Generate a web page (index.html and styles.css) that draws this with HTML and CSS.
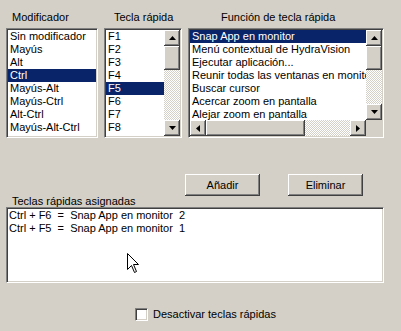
FILE: index.html
```html
<!DOCTYPE html>
<html lang="es">

<head>
  <meta charset="UTF-8">
  <title>Teclas rápidas</title>
  <link rel="stylesheet" href="styles.css">
</head>

<body>
  <div class="dialog">
    <div class="pickers">
      <div class="col col-mod">
        <div class="caption">Modificador</div>
        <div class="listbox">
          <div class="items">
            <div class="item">Sin modificador</div>
            <div class="item">Mayús</div>
            <div class="item">Alt</div>
            <div class="item selected">Ctrl</div>
            <div class="item">Mayús-Alt</div>
            <div class="item">Mayús-Ctrl</div>
            <div class="item">Alt-Ctrl</div>
            <div class="item">Mayús-Alt-Ctrl</div>
          </div>
        </div>
      </div>

      <div class="col col-key">
        <div class="caption">Tecla rápida</div>
        <div class="listbox with-vscroll">
          <div class="items">
            <div class="item">F1</div>
            <div class="item">F2</div>
            <div class="item">F3</div>
            <div class="item">F4</div>
            <div class="item selected">F5</div>
            <div class="item">F6</div>
            <div class="item">F7</div>
            <div class="item">F8</div>
            <div class="item">F9</div>
          </div>
          <div class="vscroll">
            <div class="sbtn"><svg width="7" height="4"><polygon points="3.5,0 7,4 0,4" /></svg></div>
            <div class="thumb"></div>
            <div class="track"></div>
            <div class="sbtn"><svg width="7" height="4"><polygon points="0,0 7,0 3.5,4" /></svg></div>
          </div>
        </div>
      </div>

      <div class="col col-func">
        <div class="caption">Función de tecla rápida</div>
        <div class="listbox with-both">
          <div class="items">
            <div class="item selected">Snap App en monitor</div>
            <div class="item">Menú contextual de HydraVision</div>
            <div class="item">Ejecutar aplicación...</div>
            <div class="item">Reunir todas las ventanas en monitor</div>
            <div class="item">Buscar cursor</div>
            <div class="item">Acercar zoom en pantalla</div>
            <div class="item">Alejar zoom en pantalla</div>
          </div>
          <div class="vscroll">
            <div class="sbtn"><svg width="7" height="4"><polygon points="3.5,0 7,4 0,4" /></svg></div>
            <div class="thumb"></div>
            <div class="track"></div>
            <div class="sbtn"><svg width="7" height="4"><polygon points="0,0 7,0 3.5,4" /></svg></div>
          </div>
          <div class="hscroll">
            <div class="sbtn"><svg width="4" height="7"><polygon points="0,3.5 4,0 4,7" /></svg></div>
            <div class="thumb"></div>
            <div class="track"></div>
            <div class="sbtn"><svg width="4" height="7"><polygon points="0,0 4,3.5 0,7" /></svg></div>
          </div>
          <div class="corner"></div>
        </div>
      </div>
    </div>

    <div class="actions">
      <button class="btn">Añadir</button>
      <button class="btn">Eliminar</button>
    </div>

    <div class="caption caption-assigned">Teclas rápidas asignadas</div>
    <div class="listbox assigned">
      <div class="item">Ctrl + F6  =  Snap App en monitor  2</div>
      <div class="item">Ctrl + F5  =  Snap App en monitor  1</div>
    </div>

    <label class="check">
      <span class="box"></span>
      <span>Desactivar teclas rápidas</span>
    </label>

    <!-- puntero del ratón -->
    <svg class="cursor" width="13" height="21" viewBox="0 0 13 21">
      <polygon points="0.5,0.5 0.5,16.5 4.5,12.5 7.5,19.5 9.5,18.5 6.5,11.5 11.5,11.5" fill="#fff" stroke="#000" stroke-width="1" />
    </svg>
  </div>
</body>

</html>
```

FILE: styles.css
```css
body {
  margin: 0;
  background: #d4d0c8;
  font-family: "Liberation Sans", Arial, sans-serif;
  font-size: 11px;
  color: #000;
}

.dialog {
  position: relative;
  width: 401px;
  height: 331px;
}

.pickers {
  display: flex;
  gap: 6px;
  padding: 11px 0 0 6px;
}

.caption {
  line-height: 13px;
  margin-bottom: 4px;
  white-space: nowrap;
}

.col-mod {
  width: 92px;
}

.col-mod .caption {
  padding-left: 6px;
}

.col-key {
  width: 78px;
}

.col-key .caption {
  padding-left: 10px;
}

.col-key .listbox {
  margin-top: 1px;
}

.col-func {
  width: 196px;
}

.col-func .caption {
  padding-left: 33px;
}

.col-func .listbox {
  margin-top: 2px;
}

/* listas hundidas */
.listbox {
  box-sizing: border-box;
  height: 110px;
  background: #fff;
  border: 1px solid;
  border-color: #808080 #fff #fff #808080;
  box-shadow: inset 1px 1px #404040, inset -1px -1px #d4d0c8;
  padding: 1px;
  overflow: hidden;
}

.items {
  overflow: hidden;
  height: 100%;
}

.item {
  line-height: 13px;
  height: 13px;
  padding-left: 2px;
  white-space: pre;
  overflow: hidden;
}

.selected {
  background: #0a246a;
  color: #fff;
}

.with-vscroll {
  display: grid;
  grid-template-columns: 1fr 16px;
}

.with-both {
  display: grid;
  grid-template-columns: 1fr 16px;
  grid-template-rows: 1fr 16px;
}

/* barras de desplazamiento */
.vscroll {
  display: flex;
  flex-direction: column;
}

.hscroll {
  display: flex;
}

.track {
  flex: 1;
  background: repeating-conic-gradient(#fff 0 25%, #d4d0c8 0 50%) 0 0 / 2px 2px;
}

.sbtn,
.thumb,
.btn {
  background: #d4d0c8;
  box-shadow: inset -1px -1px #404040, inset 1px 1px #fff, inset -2px -2px #808080, inset 2px 2px #d4d0c8;
}

.sbtn {
  width: 16px;
  height: 16px;
  display: flex;
  align-items: center;
  justify-content: center;
  flex: none;
}

.vscroll .thumb {
  height: 24px;
}

.hscroll .thumb {
  width: 99px;
}

.corner {
  background: #d4d0c8;
}

/* botones */
.actions {
  display: flex;
  gap: 28px;
  margin: 36px 0 0 185px;
}

.btn {
  width: 75px;
  height: 22px;
  border: none;
  font: inherit;
  color: #000;
  padding: 0;
}

.caption-assigned {
  margin: -1px 0 0 12px;
  line-height: 12px;
}

.assigned {
  width: 378px;
  height: 76px;
  margin-left: 6px;
}

.assigned .item {
  padding-left: 1px;
}

.check {
  display: flex;
  align-items: center;
  gap: 5px;
  margin: 25px 0 0 135px;
  line-height: 13px;
}

.box {
  box-sizing: border-box;
  width: 13px;
  height: 13px;
  background: #fff;
  border: 1px solid;
  border-color: #808080 #fff #fff #808080;
  box-shadow: inset 1px 1px #404040, inset -1px -1px #d4d0c8;
}

.cursor {
  position: absolute;
  left: 127px;
  top: 253px;
}
```
